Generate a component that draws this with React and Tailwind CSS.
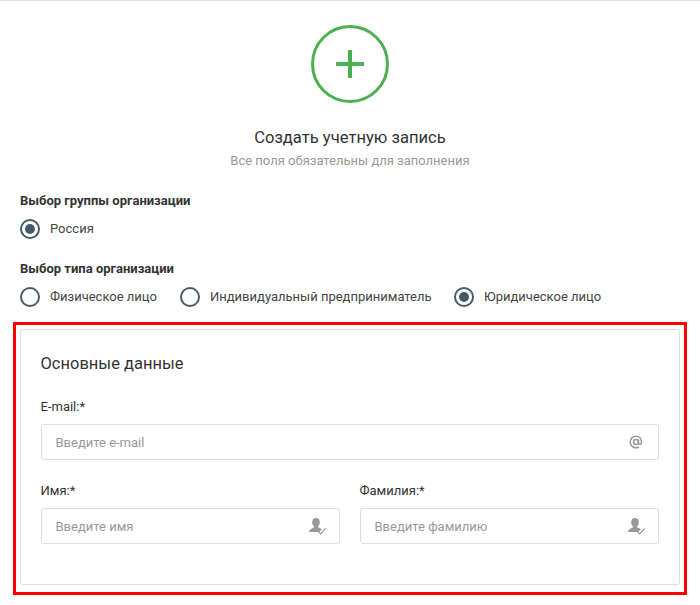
import React from 'react';

const Radio = ({ label, checked, className = '' }) => (
  <label className={`flex items-center gap-[10px] ${className}`}>
    <span className="w-5 h-5 rounded-full border-2 border-[#455a69] flex items-center justify-center">
      {checked && <span className="w-[10px] h-[10px] rounded-full bg-[#455a69]" />}
    </span>
    <span className="text-[13px] leading-5 text-[#444]">{label}</span>
  </label>
);

const AtIcon = () => (
  <svg width="14" height="14" viewBox="0 0 14 14" fill="none" stroke="#999" strokeWidth="1.5" className="mr-px">
    <circle cx="7" cy="7" r="2.5" />
    <path d="M9.500 4.500v3.400c0 1 .6 1.600 1.400 1.600 1 0 1.600-1 1.600-2.500C12.500 3.700 10.200 1.200 7 1.200 3.800 1.200 1.200 3.800 1.200 7s2.600 5.800 5.800 5.800c1.200 0 2.200-.3 3-.8" />
  </svg>
);

const UserCheckIcon = () => (
  <svg width="17" height="17" viewBox="0 0 17 17" fill="none" className="-mr-px">
    <ellipse cx="7" cy="4.300" rx="3.800" ry="4.300" fill="#999" />
    <path d="M4.800 8h4.400v1.600c1.500.4 2.900 1 3.600 1.900L10 14H0c.3-2.300 3-3.700 4.800-4.400z" fill="#999" />
    <path d="M9 12.800l2.700 3L16.600 10.500" stroke="#999" strokeWidth="1.200" />
  </svg>
);

const Field = ({ label, placeholder, icon }) => (
  <div className="flex-1 min-w-0">
    <div className="h-5 text-[13px] leading-[22px] text-[#333] mb-2 -ml-[0.5px]">{label}</div>
    <div className="h-9 border border-[#ddd] rounded-[3px] flex items-center justify-between pl-[14px] pr-[14px]">
      <span className="text-[13px] pt-[2px] text-[#999] -ml-[0.5px]">{placeholder}</span>
      {icon}
    </div>
  </div>
);

export default function App() {
  return (
    <div className="w-[700px] h-[605px] bg-white border-t border-[#ddd] overflow-hidden font-['Roboto',sans-serif]">
      <div className="flex flex-col items-center pt-6">
        <div className="w-[78px] h-[78px] rounded-full border-[3px] border-[#4caf50] flex items-center justify-center">
          <svg width="30" height="30" viewBox="0 0 30 30" stroke="#4caf50" strokeWidth="4">
            <path d="M15 1v28M1 15h28" />
          </svg>
        </div>
        <h1 className="mt-6 text-[16.6px] leading-[22px] text-[#333]">Создать учетную запись</h1>
        <p className="mt-[2px] text-[13px] leading-5 text-[#999]">Все поля обязательны для заполнения</p>
      </div>

      <div className="mt-[22px] px-5">
        <div className="text-[13px] font-bold leading-4 text-[#333] mb-[10px]">Выбор группы организации</div>
        <Radio label="Россия" checked />
        <div className="text-[13px] font-bold leading-4 text-[#333] mt-[22px] mb-[10px]">Выбор типа организации</div>
        <div className="flex gap-[23px]">
          <Radio label="Физическое лицо" />
          <Radio label="Индивидуальный предприниматель" />
          <Radio label="Юридическое лицо" checked className="-ml-[0.5px] gap-[10.5px]" />
        </div>
      </div>

      <div className="mx-[13px] mt-[15px] h-[273px] border-[3px] border-[#ff0000] p-1">
        <div className="h-[256px] border border-[#ddd] rounded-[3px] px-5 pt-6">
          <h2 className="text-[16.500px] leading-5 text-[#333] mb-[22px] -ml-[0.5px]">Основные данные</h2>
          <Field label="E-mail:*" placeholder="Введите e-mail" icon={<AtIcon />} />
          <div className="flex gap-5 mt-5">
            <Field label="Имя:*" placeholder="Введите имя" icon={<UserCheckIcon />} />
            <Field label="Фамилия:*" placeholder="Введите фамилию" icon={<UserCheckIcon />} />
          </div>
        </div>
      </div>
    </div>
  );
}
